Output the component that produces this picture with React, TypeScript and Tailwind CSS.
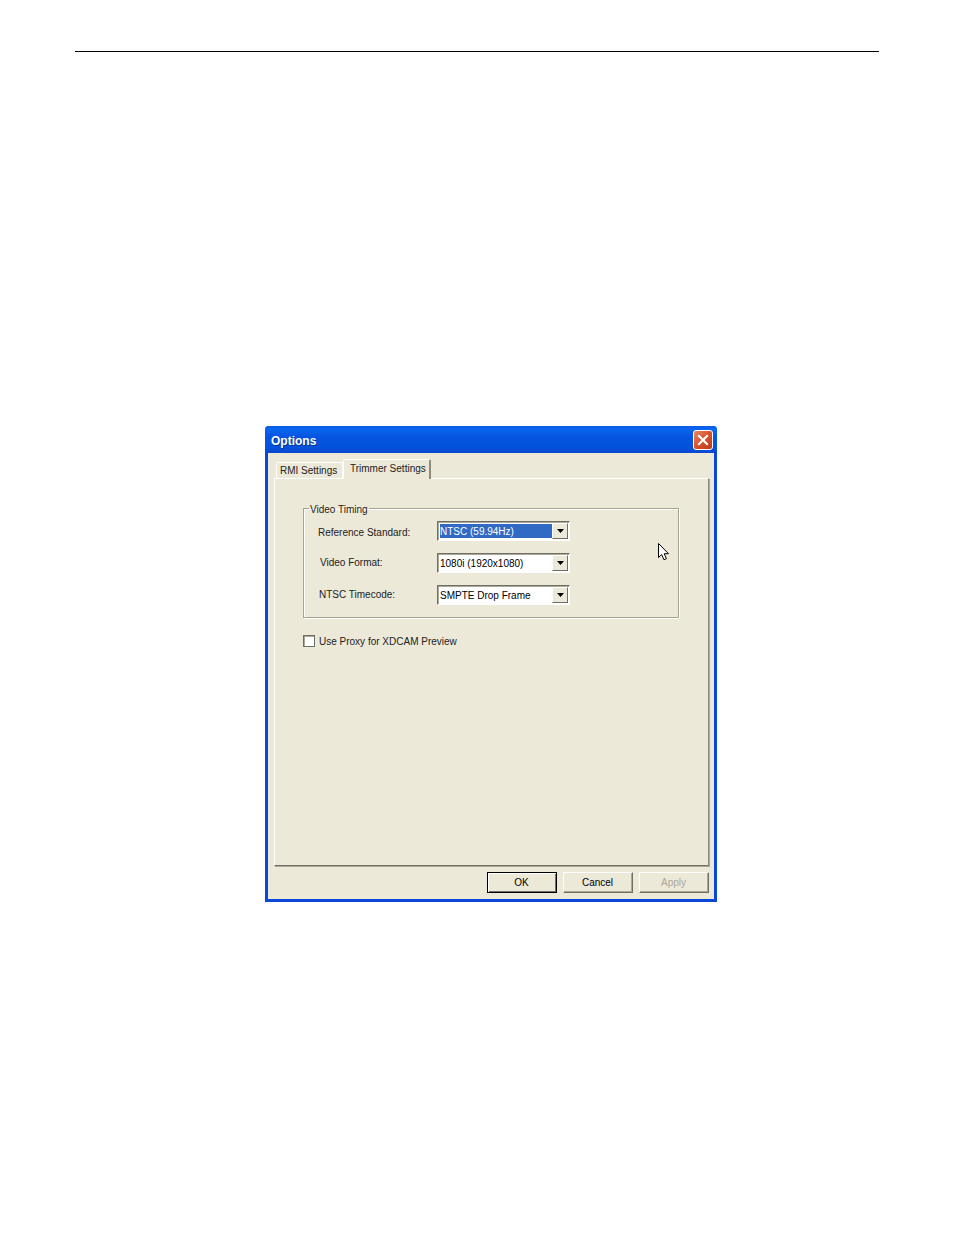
const font = { fontFamily: '"Liberation Sans", Tahoma, sans-serif' };

function Raised({ label, kind }: { label: string; kind?: "default" | "disabled" }) {
  return (
    <div
      className={`w-[70px] h-[21px] flex items-center justify-center pr-px bg-[#ece9d8] text-[10px] border ${
        kind === "default"
          ? "border-black shadow-[inset_1px_1px_0_#fff,inset_-1px_-1px_0_#716f64]"
          : "border-t-white border-l-white border-r-[#716f64] border-b-[#716f64] shadow-[inset_-1px_-1px_0_#aca899]"
      } ${kind === "disabled" ? "text-[#aca899]" : "text-black"}`}
    >
      {label}
    </div>
  );
}

function Dropdown({ value, selected }: { value: string; selected?: boolean }) {
  return (
    <div className="w-[133px] h-5 flex bg-white border border-t-[#716f64] border-l-[#716f64] border-r-white border-b-white shadow-[inset_1px_1px_0_#aca899]">
      <div className="flex-1 flex pl-[2px] pt-[2px] pb-[2px]">
        <div
          className={`flex-1 flex items-center pt-px text-[10px] leading-none whitespace-nowrap ${
            selected ? "bg-[#316ac5] text-white" : "text-black"
          }`}
        >
          {value}
        </div>
      </div>
      <div className="w-[16px] m-[1px] ml-0 flex items-center justify-center bg-[#ece9d8] border border-t-white border-l-white border-r-[#716f64] border-b-[#716f64]">
        <svg width="7" height="4" viewBox="0 0 7 4">
          <path d="M0 0h7L3.5 4z" fill="#000" />
        </svg>
      </div>
    </div>
  );
}

function Row({ label, value, selected, labelClass }: { label: string; value: string; selected?: boolean; labelClass: string }) {
  return (
    <div className="flex items-center h-5">
      <div className={`w-[119px] text-[10px] text-[#222] ${labelClass}`}>{label}</div>
      <Dropdown value={value} selected={selected} />
    </div>
  );
}

export default function App() {
  return (
    <div className="w-[954px] h-[1235px] bg-white pt-[51px] px-[75px]" style={font}>
      <div className="h-px bg-black" />

      <div className="mt-[374px] ml-[190px] w-[452px] h-[476px] flex flex-col rounded-t-[4px] overflow-hidden bg-[#0a46d8]">
        {/* Title bar */}
        <div className="h-[27px] flex items-center justify-between pl-[6px] pr-[4px] bg-[linear-gradient(180deg,#0a5be6_0%,#0a66f0_12%,#0555e0_40%,#0353dc_75%,#0a49cf_100%)]">
          <span className="pt-[3px] text-[12px] font-bold text-white [text-shadow:1px_1px_0_#0a2f8a]">Options</span>
          <div className="w-5 h-5 flex items-center justify-center rounded-[3px] border border-white bg-[linear-gradient(135deg,#e8886a,#d9502b_50%,#b93a1c)]">
            <svg width="12" height="12" viewBox="0 0 12 12">
              <path d="M2 2l8 8M10 2l-8 8" stroke="#fff" strokeWidth="2.2" strokeLinecap="square" />
            </svg>
          </div>
        </div>

        {/* Client area */}
        <div className="flex-1 mx-[3px] mb-[3px] bg-[#ece9d8] flex flex-col pl-[6px] pr-[5px] pt-[6px]">
          {/* Tabs */}
          <div className="h-[19px] flex items-end pl-[2px] relative z-10">
            <div className="w-[67px] h-4 flex items-center pl-[3px] text-[10px] text-[#222] whitespace-nowrap border border-b-0 border-white rounded-t-[2px]">
              RMI Settings
            </div>
            <div className="w-[88px] h-[20px] -mb-px flex items-center pl-[6px] pb-[3px] text-[10px] text-[#222] whitespace-nowrap bg-[#ece9d8] border-t border-l border-t-white border-l-white border-r-2 border-r-[#8f8d7e] rounded-t-[2px]">
              Trimmer Settings
            </div>
          </div>

          {/* Tab panel */}
          <div className="h-[388px] relative border border-t-white border-l-white border-r-[#8f8d7e] border-b-[#716f64] shadow-[1px_1px_0_#aca899] pl-[28px] pt-[21px]">
            <fieldset className="w-[376px] h-[118px] border border-[#a5a392] shadow-[inset_1px_1px_0_#fff,1px_1px_0_#fff] pl-[14px]">
              <legend className="-ml-[9px] px-px pt-[4px] text-[10px] leading-3 text-[#222]">Video Timing</legend>
              <div className="flex flex-col gap-3 pt-[5px]">
                <Row label="Reference Standard:" value="NTSC (59.94Hz)" selected labelClass="pt-[2px]" />
                <Row label="Video Format:" value="1080i (1920x1080)" labelClass="pl-[2px] pb-[2px]" />
                <Row label="NTSC Timecode:" value="SMPTE Drop Frame" labelClass="pl-px pb-[2px]" />
              </div>
            </fieldset>

            <div className="flex items-center gap-1 mt-[15px]">
              <div className="w-3 h-3 bg-white border border-[#6f6e64] shadow-[inset_1px_1px_0_#aca899]" />
              <span className="pt-px text-[10px] text-[#222]">Use Proxy for XDCAM Preview</span>
            </div>

            {/* Mouse pointer caught in the screenshot */}
            <svg className="absolute left-[382px] top-[63px]" width="13" height="20" viewBox="0 0 13 20">
              <path
                d="M1.5 1.5v14l3.2-3 2.2 5.2 2.5-1-2.2-5h4.3z"
                fill="#fff"
                stroke="#000"
                strokeWidth="1"
              />
            </svg>
          </div>

          {/* Buttons */}
          <div className="flex justify-end gap-[6px] mt-[6px]">
            <Raised label="OK" kind="default" />
            <Raised label="Cancel" />
            <Raised label="Apply" kind="disabled" />
          </div>
        </div>
      </div>
    </div>
  );
}
